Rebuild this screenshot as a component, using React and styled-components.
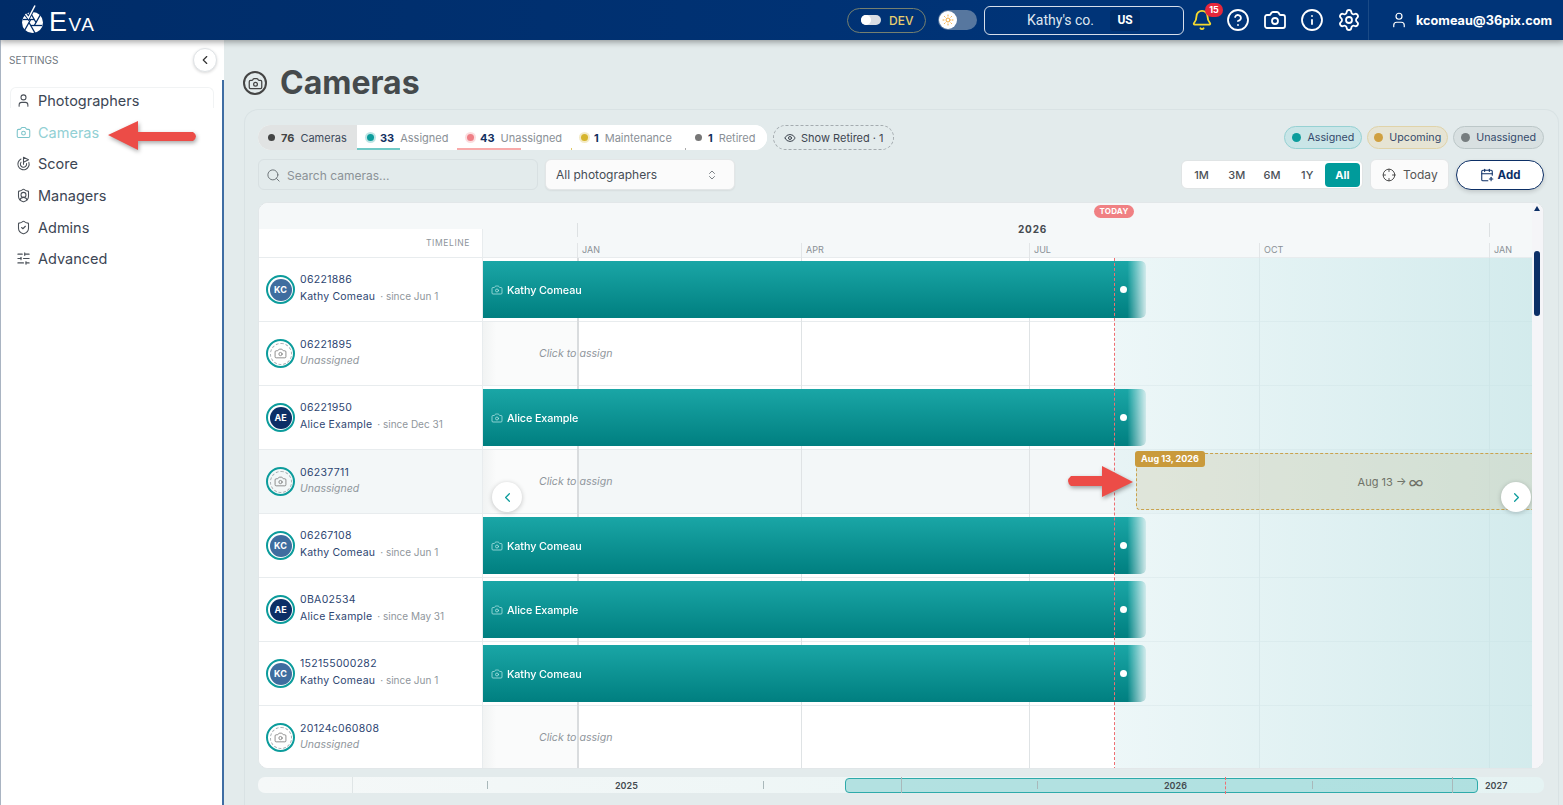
import React from 'react'
import styled, { createGlobalStyle } from 'styled-components'
import {
  User, Camera, Goal, ShieldUser, ShieldCheck, SlidersHorizontal, Bell, CircleHelp, Info, Settings,
  Search, ChevronsUpDown, Eye, Crosshair, CalendarPlus, ChevronLeft, ChevronRight, Sun,
} from 'lucide-react'

const GlobalStyle = createGlobalStyle`
  html, body { margin: 0; padding: 0; height: 100%; overflow: hidden; }
  body { font-family: Inter, "Open Sans", sans-serif; background: #e3ebec; color: #1c2b45; }
  * { box-sizing: border-box; }
`

const Page = styled.div`
  width: 1563px;
  height: 805px;
  display: flex;
  flex-direction: column;
  position: relative;
  overflow: hidden;
`

/* top bar */
const TopBar = styled.header`
  height: 40px;
  flex: none;
  display: flex;
  align-items: center;
  background: linear-gradient(90deg, #002c68 0%, #003070 35%, #003478 70%);
  color: #fff;
  position: relative;
  z-index: 3;
  box-shadow: 0 2px 6px rgba(0, 0, 0, .25);
`
const Brand = styled.div`
  width: 224px;
  height: 100%;
  display: flex;
  align-items: center;
  gap: 5px;
  padding-left: 21px;
`
const BrandName = styled.span`
  font-family: "Liberation Sans", sans-serif;
  font-size: 27px;
  letter-spacing: 1.5px;
  color: #fff;
  font-variant: small-caps;
  line-height: 1;
  margin-top: 4px;
`
const TopRight = styled.div`
  margin-left: auto;
  height: 100%;
  display: flex;
  align-items: center;
`
const DevPill = styled.div`
  width: 79px;
  height: 25px;
  border: 1px solid #75806f;
  border-radius: 13px;
  display: flex;
  align-items: center;
  gap: 8px;
  padding-left: 13px;
  font: 500 12px Inter, sans-serif;
  color: #e7cf6f;
`
const DevKnob = styled.span`
  width: 20px;
  height: 10px;
  border-radius: 5px;
  background: #d9dde3;
  display: flex;
  &::before { content: ""; width: 10px; height: 10px; border-radius: 50%; background: #fff; }
`
const ThemeToggle = styled.div`
  width: 39px;
  height: 20px;
  margin-left: 12px;
  border-radius: 10px;
  background: #57779f;
  display: flex;
  align-items: center;
`
const ThemeKnob = styled.span`
  width: 18px;
  height: 18px;
  margin-left: 1px;
  border-radius: 50%;
  background: #fff;
  color: #f3a93a;
  display: flex;
  align-items: center;
  justify-content: center;
`
const CompanyBox = styled.div`
  width: 200px;
  height: 29px;
  margin-left: 7px;
  border: 1px solid #d6deea;
  border-radius: 6px;
  display: flex;
  align-items: center;
  padding-left: 42px;
  font: 400 14px Roboto, sans-serif;
  color: #dfe6f0;
`
const RegionTag = styled.span`
  width: 30px;
  height: 21px;
  margin-left: 16px;
  border-radius: 3px;
  background: #002c68;
  display: flex;
  align-items: center;
  justify-content: center;
  font: 700 12px Roboto, sans-serif;
  color: #fff;
`
const IconRow = styled.div`
  display: flex;
  align-items: center;
  gap: 13px;
  margin-left: 7px;
  width: 177px;
`
const BellWrap = styled.span`
  position: relative;
  display: flex;
  color: #f6d92e;
`
const BellBadge = styled.span`
  position: absolute;
  top: -6px;
  left: 14px;
  width: 18px;
  height: 14px;
  border-radius: 7px;
  background: #e5273b;
  color: #fff;
  font: 700 9px/14px Inter, sans-serif;
  text-align: center;
`
const UserBox = styled.div`
  width: 195px;
  height: 100%;
  border-left: 1px solid #1a4a86;
  display: flex;
  align-items: center;
  gap: 8px;
  padding-left: 21px;
  font: 700 12.7px Inter, sans-serif;
  white-space: nowrap;
  color: #fff;
`

/* layout */
const Body = styled.div`
  flex: 1;
  display: flex;
  min-height: 0;
`
const Sidebar = styled.aside`
  width: 224px;
  flex: none;
  background: #fff;
  border-left: 1px solid #a9b4c2;
  display: flex;
  flex-direction: column;
`
const SideHead = styled.div`
  height: 40px;
  flex: none;
  display: flex;
  align-items: center;
  justify-content: space-between;
  padding: 0 7px 0 8px;
  font-size: 10px;
  color: #6f7780;
  box-shadow: inset 0 8px 8px -8px rgba(0, 0, 0, .2);
`
const RoundBtn = styled.button`
  width: 24px;
  height: 24px;
  padding: 0;
  border: 1px solid #dfe3e6;
  border-radius: 50%;
  background: #fff;
  display: flex;
  align-items: center;
  justify-content: center;
  color: #333;
  box-shadow: 0 1px 3px rgba(0, 0, 0, .15);
`
const SideNav = styled.nav`
  flex: 1;
  border-right: 2px solid #3f6da3;
  padding: 5px 8px;
`
const NavItem = styled.div`
  position: relative;
  height: 31.6px;
  display: flex;
  align-items: center;
  gap: 7px;
  padding-left: 7px;
  font-size: 14.5px;
  color: ${p => (p.$active ? '#92d0d4' : '#3c4654')};
  svg { color: ${p => (p.$active ? '#7cc4ca' : '#4a5058')}; }
  &:first-child::before {
    content: "";
    position: absolute;
    top: 2px;
    left: 1px;
    right: 0;
    height: 20px;
    border: 1px solid #f1f3f4;
    border-bottom: 0;
    border-radius: 6px 6px 0 0;
  }
`

const Main = styled.main`
  flex: 1;
  min-width: 0;
  padding: 0 4px 0 20px;
  display: flex;
  flex-direction: column;
  box-shadow: inset 0 8px 8px -8px rgba(0, 0, 0, .2);
`
const TitleRow = styled.div`
  height: 69px;
  flex: none;
  display: flex;
  align-items: center;
  gap: 13px;
  padding-top: 17px;
`
const TitleIcon = styled.span`
  width: 24px;
  height: 24px;
  margin-left: -1px;
  border: 2px solid #444;
  border-radius: 50%;
  display: flex;
  align-items: center;
  justify-content: center;
  color: #444;
`
const Title = styled.h1`
  margin: 0;
  font-size: 32px;
  line-height: 1;
  font-weight: 700;
  color: #454a4c;
`
const Panel = styled.section`
  flex: 1;
  min-height: 0;
  border: 1px solid #d9e2e4;
  border-bottom: 0;
  border-radius: 14px 14px 0 0;
  padding: 15px 14px 0 13px;
  display: flex;
  flex-direction: column;
`
const ToolRow = styled.div`
  display: flex;
  align-items: center;
  justify-content: space-between;
`
const ToolGroup = styled.div`
  display: flex;
  align-items: center;
  gap: ${p => p.$gap || 6}px;
`

const Tabs = styled.div`
  height: 25px;
  display: flex;
  border-radius: 13px;
  background: #fff;
  overflow: hidden;
  font-size: 11px;
`
const Tab = styled.div`
  position: relative;
  height: 100%;
  width: ${p => p.$w}px;
  display: flex;
  align-items: center;
  gap: 6px;
  padding-left: 10px;
  color: #8a9096;
  background: ${p => (p.$on ? '#e1e3e3' : '#fff')};
  &::after {
    content: "";
    position: absolute;
    left: 0;
    bottom: 0;
    height: 2px;
    width: ${p => p.$bar || 0}px;
    background: ${p => p.$barColor || 'transparent'};
  }
`
const TabDot = styled.span`
  width: 7px;
  height: 7px;
  border-radius: 50%;
  flex: none;
  background: ${p => p.$c};
  box-shadow: 0 0 0 2px ${p => p.$c}44;
`
const TabCount = styled.b`
  font-weight: 700;
  color: ${p => (p.$dark ? '#444' : '#12305f')};
`
const TabLabel = styled.span`
  color: ${p => (p.$dark ? '#3d4a5c' : '#8a9096')};
`
const RetiredBtn = styled.div`
  height: 25px;
  width: 121px;
  border: 1px dashed #a4abaf;
  border-radius: 13px;
  display: flex;
  align-items: center;
  gap: 5px;
  padding-left: 10px;
  font-size: 11px;
  color: #3f4650;
`
const Legend = styled.div`
  height: 23px;
  border-radius: 12px;
  display: flex;
  align-items: center;
  gap: 6px;
  padding: 0 ${p => p.$pad || 7}px;
  font-size: 10.7px;
  color: #34496b;
  background: ${p => p.$bg};
  border: 1px solid ${p => p.$border};
`
const LegendDot = styled.span`
  width: 9px;
  height: 9px;
  border-radius: 50%;
  background: ${p => p.$c};
`

const SearchRow = styled(ToolRow)`
  margin-top: 9px;
  height: 31px;
`
const SearchBox = styled.div`
  width: 280px;
  height: 31px;
  border: 1px solid #d8e0e2;
  border-radius: 6px;
  background: #e3ebec;
  display: flex;
  align-items: center;
  gap: 6px;
  padding: 1px 0 0 7px;
  font-size: 12px;
  color: #8b9297;
  svg { color: #6f767a; }
`
const SelectBox = styled.div`
  width: 190px;
  height: 31px;
  border: 1px solid #e3e6e7;
  border-radius: 6px;
  background: #fbfbfb;
  display: flex;
  align-items: center;
  justify-content: space-between;
  padding: 0 16px 0 10px;
  font-size: 12px;
  color: #454c55;
  box-shadow: 0 1px 2px rgba(0, 0, 0, .06);
  svg { color: #7c8287; }
`
const RangeGroup = styled.div`
  width: 182px;
  height: 29px;
  border: 1px solid #e0e4e5;
  border-radius: 6px;
  background: #fff;
  display: flex;
  align-items: center;
  padding: 2px;
`
const RangeBtn = styled.span`
  flex: 1;
  height: 24px;
  border-radius: 4px;
  display: flex;
  align-items: center;
  justify-content: center;
  font-size: 11px;
  font-weight: ${p => (p.$on ? 700 : 500)};
  color: ${p => (p.$on ? '#fff' : '#4c5158')};
  background: ${p => (p.$on ? '#009b9b' : 'transparent')};
`
const TodayBtn = styled.div`
  width: 79px;
  height: 31px;
  border: 1px solid #e3e6e7;
  border-radius: 6px;
  background: #fbfbfb;
  display: flex;
  align-items: center;
  gap: 7px;
  padding-left: 11px;
  font-size: 12px;
  color: #555;
  svg { color: #444; }
`
const AddBtn = styled.div`
  width: 88px;
  height: 30px;
  border: 1px solid #0c2f66;
  border-radius: 15px;
  background: #fff;
  display: flex;
  align-items: center;
  justify-content: center;
  gap: 4px;
  font-size: 11.5px;
  font-weight: 700;
  color: #0c2f66;
  box-shadow: 0 2px 4px rgba(0, 0, 0, .15);
`

/* timeline */
const Timeline = styled.div`
  position: relative;
  margin-top: 12px;
  height: 567px;
  flex: none;
  border: 1px solid #e2e7e9;
  border-radius: 10px;
  background: #fff;
  overflow: hidden;
  display: flex;
`
const TimelineMain = styled.div`
  flex: 1;
  min-width: 0;
  position: relative;
`
const Scrollbar = styled.div`
  width: 11px;
  flex: none;
  background: #f5f5f8;
  position: relative;
  z-index: 4;
`
const ScrollUp = styled.span`
  position: absolute;
  top: 3px;
  left: 2px;
  border: 3.5px solid transparent;
  border-top: 0;
  border-bottom: 5px solid #0c2f66;
`
const ScrollThumb = styled.span`
  position: absolute;
  top: 48px;
  left: 2px;
  width: 6px;
  height: 65px;
  border-radius: 3px;
  background: #0c2f66;
`
const HeadRow = styled.div`
  height: 55px;
  display: grid;
  grid-template-columns: 224px 1fr;
  background: #f5f8f9;
  border-bottom: 1px solid #e8ecee;
`
const HeadLeft = styled.div`
  align-self: end;
  height: 28px;
  background: #fff;
  border-right: 1px solid #e8ecee;
  display: flex;
  align-items: center;
  justify-content: flex-end;
  padding-right: 12px;
  font-size: 8.5px;
  letter-spacing: .6px;
  color: #8d959b;
`
const HeadRight = styled.div`
  position: relative;
`
const YearLabel = styled.span`
  position: absolute;
  top: 20px;
  left: 535px;
  font-size: 10px;
  font-weight: 700;
  letter-spacing: .8px;
  color: #454a50;
`
const YearTick = styled.span`
  position: absolute;
  top: 20px;
  left: ${p => p.$x}px;
  width: 1px;
  height: 14px;
  background: #dde1e3;
`
const MonthLabel = styled.span`
  position: absolute;
  top: 40px;
  left: ${p => p.$x}px;
  height: 15px;
  padding-left: 4px;
  border-left: 1px solid #e2e5e7;
  font-size: 9px;
  line-height: 13px;
  color: #8a9096;
`
const TodayPill = styled.span`
  position: absolute;
  top: 2px;
  left: 611px;
  width: 40px;
  height: 13px;
  border-radius: 7px;
  background: #f08083;
  color: #fff;
  font-size: 8px;
  font-weight: 700;
  line-height: 13px;
  text-align: center;
  letter-spacing: .2px;
`

const Rows = styled.div`
  position: relative;
`
const Row = styled.div`
  height: 64px;
  display: grid;
  grid-template-columns: 224px 1fr;
  border-bottom: 1px solid #e8ecee;
  background: ${p => (p.$hover ? '#f3f7f8' : '#fff')};
`
const CamCell = styled.div`
  border-right: 1px solid #e8ecee;
  display: flex;
  align-items: center;
  gap: 5px;
  padding-left: 7px;
`
const Avatar = styled.span`
  width: 29px;
  height: 29px;
  flex: none;
  border-radius: 50%;
  border: 2px solid #0c9c9c;
  padding: 1.5px;
  display: flex;
`
const AvatarFace = styled.span`
  flex: 1;
  border-radius: 50%;
  background: ${p => (p.$bg ? p.$bg : 'transparent')};
  border: ${p => (p.$bg ? '0' : '1px dashed #aab0b4')};
  color: #fff;
  font-size: 9px;
  font-weight: 700;
  display: flex;
  align-items: center;
  justify-content: center;
  svg { color: #777; }
`
const CamText = styled.div`
  margin-top: -2px;
  font-size: 10.5px;
  line-height: 16px;
  white-space: nowrap;
  color: #2d4571;
`
const Serial = styled.div`
  letter-spacing: .3px;
`
const Assignee = styled.div`
  letter-spacing: .2px;
`
const Since = styled.span`
  color: #8f969c;
  font-size: 10px;
  letter-spacing: 0;
  margin-left: 5px;
`
const Muted = styled.div`
  font-style: italic;
  color: #8f969c;
`
const Track = styled.div`
  position: relative;
  padding-top: 3px;
`
const Bar = styled.div`
  position: relative;
  z-index: 1;
  width: 663px;
  height: 57px;
  border-radius: 0 5px 5px 0;
  background: linear-gradient(180deg, #1aa6a6 0%, #007f80 100%);
  mask-image: linear-gradient(90deg, #000 97.2%, rgba(0, 0, 0, .12) 100%);
  display: flex;
  align-items: center;
  gap: 4px;
  padding: 1px 0 0 8px;
  font-size: 10.8px;
  font-weight: 500;
  letter-spacing: -.1px;
  color: #fff;
  svg { color: #b6e5e5; }
`
const BarEnd = styled.span`
  position: absolute;
  right: 19px;
  top: 25px;
  width: 7px;
  height: 7px;
  border-radius: 50%;
  background: #fff;
`
const AssignHint = styled.div`
  position: absolute;
  top: 0;
  left: 0;
  bottom: 0;
  width: 94px;
  background: linear-gradient(90deg, #f1f3f3, #fafbfb 14%);
`
const AssignText = styled.span`
  position: absolute;
  top: 25px;
  left: 56px;
  font-size: 10.6px;
  font-style: italic;
  color: #8f969c;
  z-index: 1;
`

/* things lying over the rows */
const Future = styled.div`
  position: absolute;
  top: 0;
  bottom: 0;
  left: 856px;
  right: 0;
  background: linear-gradient(90deg, rgba(222, 240, 242, .55), rgba(200, 230, 232, .8));
  pointer-events: none;
`
const GridLine = styled.span`
  position: absolute;
  top: 0;
  bottom: 0;
  left: ${p => p.$x}px;
  width: ${p => p.$w || 1}px;
  background: ${p => p.$c || '#dfe3e5'};
`
const TodayLine = styled.span`
  position: absolute;
  z-index: 2;
  top: 0;
  bottom: 0;
  left: 855px;
  border-left: 1px dashed #ee6f72;
`
const Upcoming = styled.div`
  position: absolute;
  z-index: 2;
  top: 195px;
  left: 877px;
  right: -112px;
  height: 57px;
  border: 1px dashed #c9a24d;
  border-right: 0;
  border-radius: 4px 0 0 4px;
  background: rgba(208, 200, 160, .3);
  display: flex;
  align-items: center;
  justify-content: center;
  gap: 2px;
  font-size: 11px;
  color: #6f7268;
`
const InfinityMark = styled.span`
  font-size: 16px;
  line-height: 1;
`
const UpcomingTag = styled.span`
  position: absolute;
  top: -3px;
  left: -2px;
  width: 70px;
  height: 16px;
  border-radius: 3px;
  background: #c99a3c;
  color: #fff;
  font-size: 9px;
  font-weight: 700;
  line-height: 16px;
  text-align: center;
`
const PageBtn = styled.button`
  position: absolute;
  z-index: 3;
  top: 224px;
  ${p => (p.$right ? 'right: 1px' : 'left: 233px')};
  width: 30px;
  height: 30px;
  padding: 0;
  border: 0;
  border-radius: 50%;
  background: #fff;
  color: #0c9c9c;
  display: flex;
  align-items: center;
  justify-content: center;
  box-shadow: 0 1px 5px rgba(0, 0, 0, .22);
`

/* overview strip */
const Overview = styled.div`
  position: relative;
  margin-top: 8px;
  height: 16px;
  flex: none;
  border-radius: 7px;
  background: linear-gradient(90deg, #f5f8f8, #e5f3f3);
  display: flex;
  align-items: center;
`
const OvWindow = styled.div`
  position: absolute;
  left: 587px;
  width: 633px;
  top: 1px;
  bottom: 0;
  border: 1px solid #2eaaaa;
  border-radius: 4px;
  background: rgba(140, 212, 212, .6);
`
const OvYear = styled.span`
  position: absolute;
  left: ${p => p.$x}px;
  font-size: 9px;
  font-weight: 600;
  color: #454a50;
`
const OvTick = styled.span`
  position: absolute;
  left: ${p => p.$x}px;
  top: ${p => (p.$full ? 0 : 4)}px;
  bottom: ${p => (p.$full ? 0 : 4)}px;
  width: 1px;
  background: ${p => p.$c || '#a9b8ba'};
`
const OvToday = styled.span`
  position: absolute;
  left: 967px;
  top: 0;
  bottom: -1px;
  border-left: 1px dashed #ee6f72;
`

/* red annotation arrows */
const Arrow = styled.svg`
  position: absolute;
  left: ${p => p.$x}px;
  top: ${p => p.$y}px;
  overflow: visible;
  z-index: 5;
  filter: drop-shadow(1px 2px 2px rgba(0, 0, 0, .35));
`

const LogoMark = () => (
  <svg width="23" height="30" viewBox="0 0 23 30">
    <g transform="translate(0 -1)">
      <circle cx="11.5" cy="18.5" r="10.5" fill="#fff" />
      <g stroke="#002c68" strokeWidth="1.3" fill="none">
        <path d="M13.3 15.5 L2 15.5" />
        <path d="M15 18.5 L9 8" />
        <path d="M13.3 21.5 L19.5 10.5" />
        <path d="M9.7 21.5 L21 21.5" />
        <path d="M8 18.5 L14 29" />
        <path d="M9.7 15.5 L3.5 26.5" />
      </g>
    </g>
    <path d="M4.5 9 L7.5 13 L14 .5" fill="none" stroke="#002c68" strokeWidth="3.6" />
    <path d="M4.5 9 L7.5 13 L14 .5" fill="none" stroke="#fff" strokeWidth="1.5" />
  </svg>
)

const people = {
  KC: { initials: 'KC', name: 'Kathy Comeau', bg: '#3f6d9f' },
  AE: { initials: 'AE', name: 'Alice Example', bg: '#0c2f66' },
}

const cameras = [
  { serial: '06221886', who: 'KC', since: 'Jun 1' },
  { serial: '06221895' },
  { serial: '06221950', who: 'AE', since: 'Dec 31' },
  { serial: '06237711', hover: true },
  { serial: '06267108', who: 'KC', since: 'Jun 1' },
  { serial: '0BA02534', who: 'AE', since: 'May 31' },
  { serial: '152155000282', who: 'KC', since: 'Jun 1' },
  { serial: '20124c060808' },
]

const navItems = [
  ['Photographers', User],
  ['Cameras', Camera, true],
  ['Score', Goal],
  ['Managers', ShieldUser],
  ['Admins', ShieldCheck],
  ['Advanced', SlidersHorizontal],
]

const CameraRow = ({ cam }) => {
  const person = cam.who && people[cam.who]
  return (
    <Row $hover={cam.hover}>
      <CamCell>
        <Avatar>
          <AvatarFace $bg={person && person.bg}>
            {person ? person.initials : <Camera size={13} strokeWidth={1.5} />}
          </AvatarFace>
        </Avatar>
        <CamText>
          <Serial>{cam.serial}</Serial>
          {person
            ? <Assignee>{person.name}<Since>· since {cam.since}</Since></Assignee>
            : <Muted>Unassigned</Muted>}
        </CamText>
      </CamCell>
      <Track>
        {person ? (
          <Bar>
            <Camera size={12} strokeWidth={1.5} />
            {person.name}
            <BarEnd />
          </Bar>
        ) : (
          <>
            <AssignHint />
            <AssignText>Click to assign</AssignText>
          </>
        )}
      </Track>
    </Row>
  )
}

const App = () => (
  <Page>
    <GlobalStyle />
    <TopBar>
      <Brand>
        <LogoMark />
        <BrandName>Eva</BrandName>
      </Brand>
      <TopRight>
        <DevPill><DevKnob />DEV</DevPill>
        <ThemeToggle><ThemeKnob><Sun size={12} /></ThemeKnob></ThemeToggle>
        <CompanyBox>Kathy's co.<RegionTag>US</RegionTag></CompanyBox>
        <IconRow>
          <BellWrap><Bell size={22} strokeWidth={2} /><BellBadge>15</BellBadge></BellWrap>
          <CircleHelp size={24} strokeWidth={1.8} />
          <Camera size={24} strokeWidth={1.8} />
          <Info size={24} strokeWidth={1.8} />
          <Settings size={24} strokeWidth={1.8} />
        </IconRow>
        <UserBox><User size={18} strokeWidth={1.6} />kcomeau@36pix.com</UserBox>
      </TopRight>
    </TopBar>

    <Body>
      <Sidebar>
        <SideHead>
          SETTINGS
          <RoundBtn><ChevronLeft size={14} /></RoundBtn>
        </SideHead>
        <SideNav>
          {navItems.map(([label, Icon, active]) => (
            <NavItem key={label} $active={active}>
              <Icon size={15} strokeWidth={1.7} />
              {label}
            </NavItem>
          ))}
        </SideNav>
      </Sidebar>

      <Main>
        <TitleRow>
          <TitleIcon><Camera size={15} strokeWidth={2} /></TitleIcon>
          <Title>Cameras</Title>
        </TitleRow>
        <Panel>
          <ToolRow>
            <ToolGroup>
              <Tabs>
                <Tab $on $w={99}><TabDot $c="#444" /><TabCount $dark>76</TabCount><TabLabel $dark>Cameras</TabLabel></Tab>
                <Tab $w={100} $bar={43} $barColor="#6fc9c6"><TabDot $c="#0c9c9c" /><TabCount>33</TabCount><TabLabel>Assigned</TabLabel></Tab>
                <Tab $w={114} $bar={64} $barColor="#f8aaaa"><TabDot $c="#ef7f86" /><TabCount>43</TabCount><TabLabel>Unassigned</TabLabel></Tab>
                <Tab $w={114} $bar={1} $barColor="#e0c96a"><TabDot $c="#d6b52c" /><TabCount>1</TabCount><TabLabel>Maintenance</TabLabel></Tab>
                <Tab $w={82} $bar={1} $barColor="#aaa"><TabDot $c="#777" /><TabCount>1</TabCount><TabLabel>Retired</TabLabel></Tab>
              </Tabs>
              <RetiredBtn><Eye size={12} />Show Retired · 1</RetiredBtn>
            </ToolGroup>
            <ToolGroup $gap={5}>
              <Legend $bg="#c9e5e7" $border="#96d1d3"><LegendDot $c="#0c9c9c" />Assigned</Legend>
              <Legend $bg="#e6e4d4" $border="#e0d3a9" $pad={6}><LegendDot $c="#d0a040" />Upcoming</Legend>
              <Legend $bg="#d8e0e1" $border="#bcc7c8"><LegendDot $c="#767d7f" />Unassigned</Legend>
            </ToolGroup>
          </ToolRow>

          <SearchRow>
            <ToolGroup $gap={7}>
              <SearchBox><Search size={15} strokeWidth={1.6} />Search cameras...</SearchBox>
              <SelectBox>All photographers<ChevronsUpDown size={12} /></SelectBox>
            </ToolGroup>
            <ToolGroup $gap={7}>
              <RangeGroup>
                {['1M', '3M', '6M', '1Y'].map(r => <RangeBtn key={r}>{r}</RangeBtn>)}
                <RangeBtn $on>All</RangeBtn>
              </RangeGroup>
              <TodayBtn><Crosshair size={14} strokeWidth={1.6} />Today</TodayBtn>
              <AddBtn><CalendarPlus size={14} strokeWidth={1.8} />Add</AddBtn>
            </ToolGroup>
          </SearchRow>

          <Timeline>
            <TimelineMain>
              <HeadRow>
                <HeadLeft>TIMELINE</HeadLeft>
                <HeadRight>
                  <TodayPill>TODAY</TodayPill>
                  <YearTick $x={94} />
                  <YearLabel>2026</YearLabel>
                  <YearTick $x={1006} />
                  <MonthLabel $x={94}>JAN</MonthLabel>
                  <MonthLabel $x={318}>APR</MonthLabel>
                  <MonthLabel $x={546}>JUL</MonthLabel>
                  <MonthLabel $x={776}>OCT</MonthLabel>
                  <MonthLabel $x={1006}>JAN</MonthLabel>
                </HeadRight>
              </HeadRow>
              <Rows>
                {cameras.map(cam => <CameraRow key={cam.serial} cam={cam} />)}
                <GridLine $x={318} $w={2} $c="#d9dcde" />
                <GridLine $x={542} />
                <GridLine $x={770} />
                <GridLine $x={1000} />
                <GridLine $x={1230} />
                <Future />
                <TodayLine />
                <Upcoming>
                  <UpcomingTag>Aug 13, 2026</UpcomingTag>
                  Aug 13 → <InfinityMark>∞</InfinityMark>
                </Upcoming>
                <PageBtn><ChevronLeft size={15} /></PageBtn>
                <PageBtn $right><ChevronRight size={15} /></PageBtn>
              </Rows>
            </TimelineMain>
            <Scrollbar><ScrollUp /><ScrollThumb /></Scrollbar>
          </Timeline>

          <Overview>
            <OvTick $x={94} $full $c="#dfe5e6" />
            <OvTick $x={229} />
            <OvYear $x={357}>2025</OvYear>
            <OvTick $x={505} />
            <OvWindow />
            <OvTick $x={643} $full />
            <OvTick $x={779} />
            <OvYear $x={906}>2026</OvYear>
            <OvToday />
            <OvTick $x={1054} />
            <OvTick $x={1194} $full />
            <OvYear $x={1227}>2027</OvYear>
          </Overview>
        </Panel>
      </Main>
    </Body>

    <Arrow $x={107} $y={122} width="92" height="28" viewBox="0 0 92 28">
      <path d="M1 13 L31 -1 L31 10 L86 10 Q92 14 86 19 L31 19 L31 28 Z" fill="#ec4c47" />
    </Arrow>
    <Arrow $x={1066} $y={466} width="68" height="32" viewBox="0 0 68 32">
      <path d="M67 16 L36 0 L36 10 L5 10 Q-1 15 5 20 L36 20 L36 31 Z" fill="#ec4c47" />
    </Arrow>
  </Page>
)

export default App
